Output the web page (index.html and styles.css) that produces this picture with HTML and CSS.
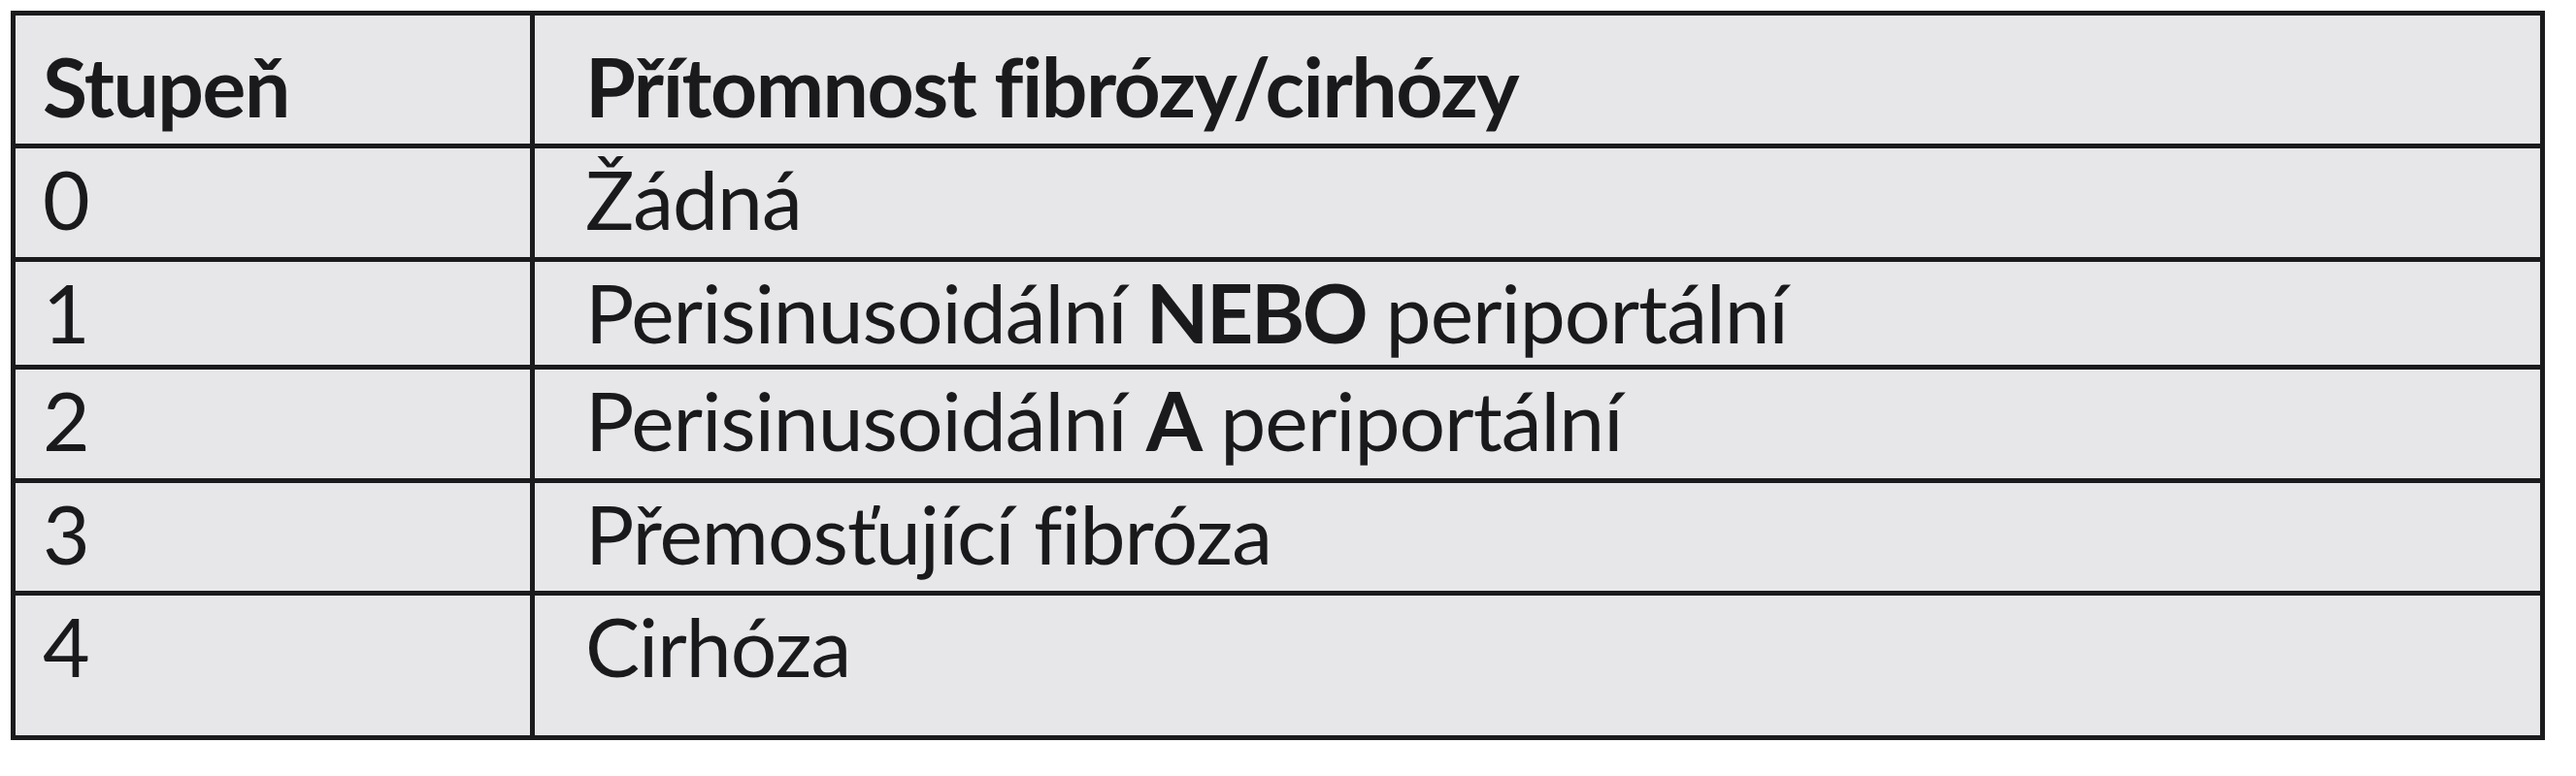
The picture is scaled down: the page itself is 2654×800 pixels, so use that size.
FILE: index.html
```html
<!DOCTYPE html>
<html lang="cs">
<head>
<meta charset="utf-8">
<title>Stupeň fibrózy</title>
<link rel="stylesheet" href="styles.css">
</head>
<body>
<div class="page">
  <div class="grade-table">
    <div class="cell col-grade row-head head">Stupeň</div>
    <div class="cell col-desc row-head head">Přítomnost fibrózy/cirhózy</div>

    <div class="cell col-grade">0</div>
    <div class="cell col-desc">Žádná</div>

    <div class="cell col-grade">1</div>
    <div class="cell col-desc">Perisinusoidální <b>NEBO</b> periportální</div>

    <div class="cell col-grade">2</div>
    <div class="cell col-desc">Perisinusoidální <b>A</b> periportální</div>

    <div class="cell col-grade">3</div>
    <div class="cell col-desc">Přemosťující fibróza</div>

    <div class="cell col-grade">4</div>
    <div class="cell col-desc">Cirhóza</div>
  </div>
</div>
</body>
</html>
```

FILE: styles.css
```css
html, body {
  margin: 0;
  padding: 0;
  background: #ffffff;
}

.page {
  padding: 11px 0 0 11px;
}

.grade-table {
  display: grid;
  width: 2601px;
  grid-template-columns: 530px 2066px;
  grid-template-rows: 132px 112px 106px 112px 111px 144px;
  gap: 5px;
  border: 5px solid #1b1b1d;
  background: #1b1b1d;
  font-family: Lato, "Open Sans", sans-serif;
  font-size: 84px;
  line-height: 84px;
  letter-spacing: -1px;
  color: #1a1a1c;
}

.cell {
  background: #e7e7e9;
  padding-top: 10px;
  white-space: nowrap;
  overflow: hidden;
}

.col-grade {
  padding-left: 28px;
}

.col-desc {
  padding-left: 52px;
}

.row-head {
  padding-top: 31px;
}

.head {
  font-weight: 700;
  letter-spacing: -1.5px;
}

.cell b {
  font-weight: 700;
  letter-spacing: -2.5px;
}
```
